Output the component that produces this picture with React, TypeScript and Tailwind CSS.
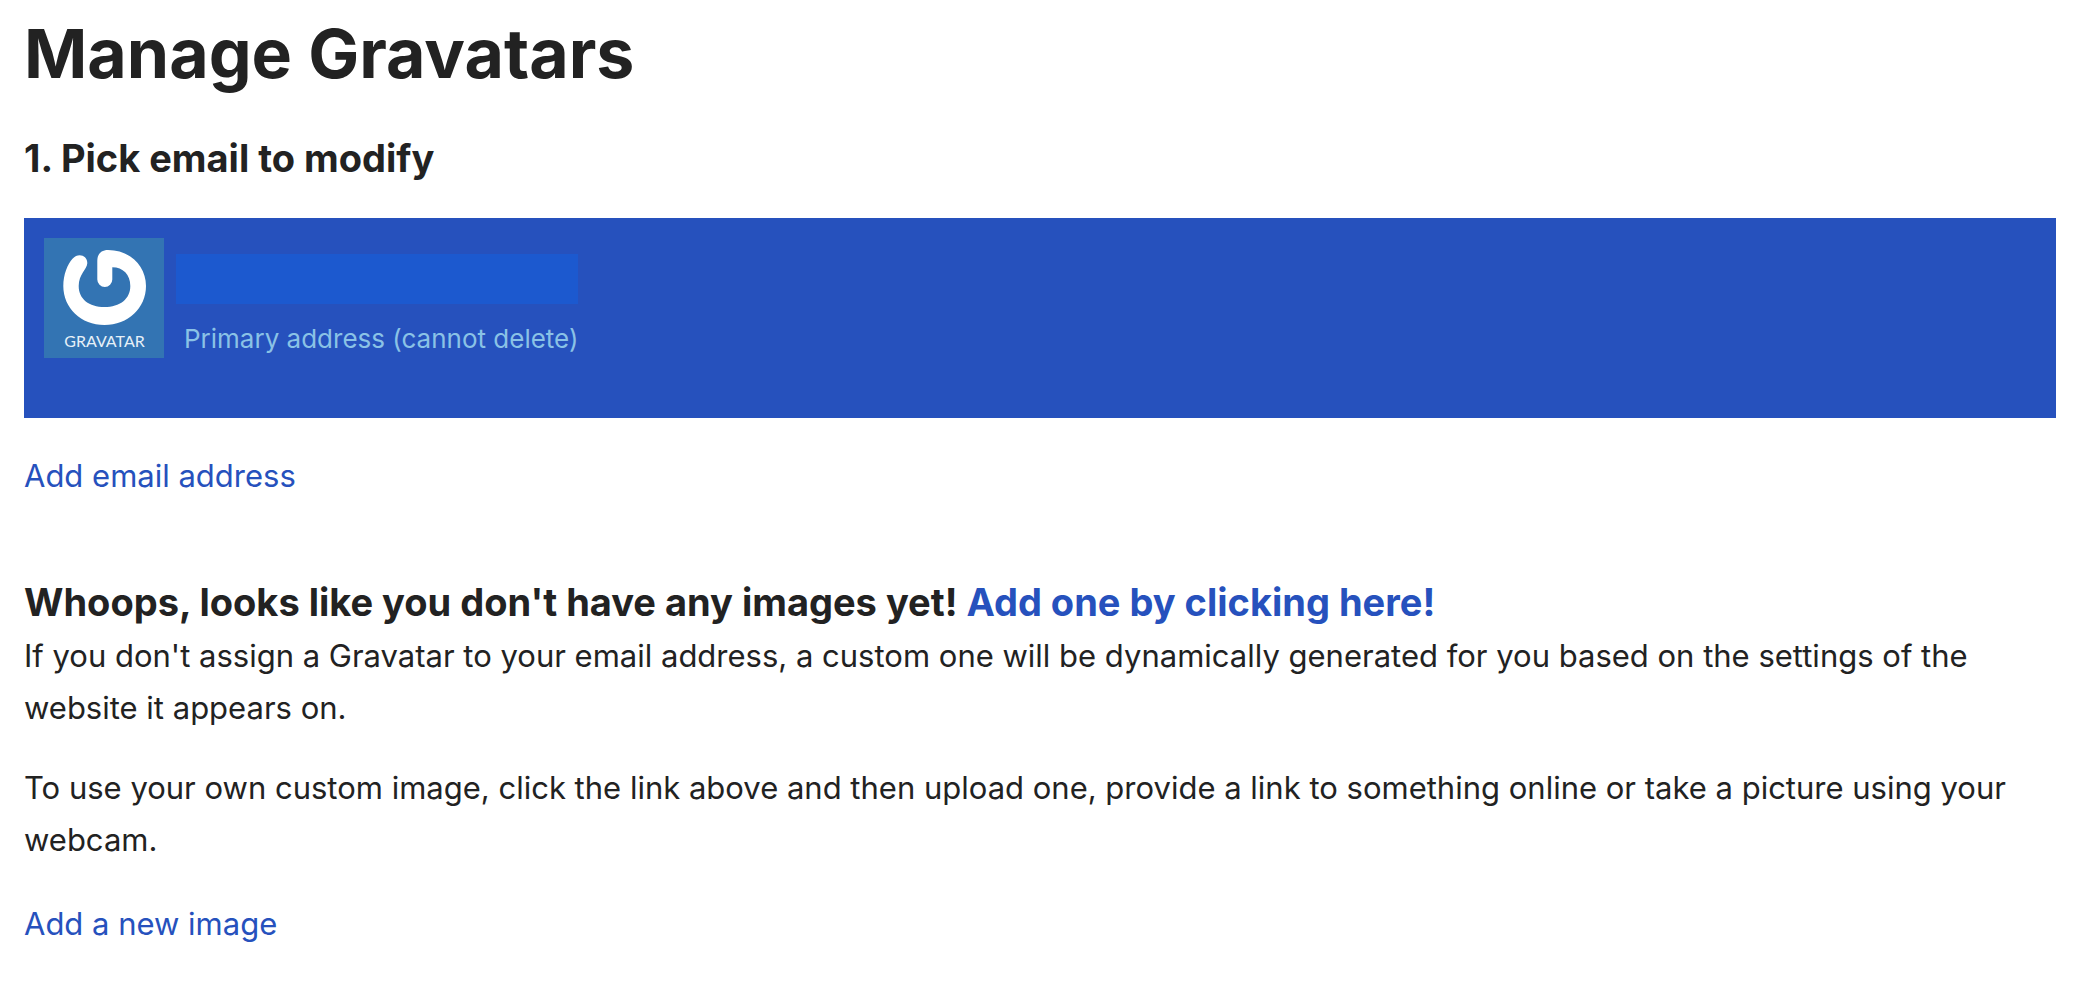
import React from 'react';

interface EmailEntry {
    id: string;
    note: string;
}

const emails: EmailEntry[] = [
    { id: 'primary', note: 'Primary address (cannot delete)' },
];

const GravatarLogo: React.FC = () => (
    <svg viewBox="0 0 120 120" className="size-[120px] shrink-0 bg-[#3374b3]" role="img" aria-label="Gravatar">
        <path
            fill="#fff"
            d="M53.3 23 C53.3 16 57 12 64 12 C86 12 102 28 102 48 C102 70 84 87 60.5 87 C37 87 19.3 70 19.3 48 C19.3 36.5 23.5 26.5 28.5 20.8 C34.5 14.2 43.5 17.8 43.3 25.2 C43 31.5 34.7 36 34.7 48 C34.7 61 45 69 60.5 69 C76 69 86.3 61 86.3 48 C86.3 36.5 79 29.3 68.3 29.3 V41.5 A7.5 7.5 0 0 1 53.3 41.5 Z"
        />
        <text x="60.5" y="109" textAnchor="middle" fill="#e6f0f8" fontSize="16" className="font-['Lato',sans-serif]">GRAVATAR</text>
    </svg>
);

const EmailCard: React.FC<{ email: EmailEntry }> = ({ email }) => (
    <li className="flex gap-3 bg-[#2651bd] px-5 pt-5 pb-[60px]">
        <GravatarLogo />
        <div className="flex flex-col pt-4">
            {/* Address is hidden */}
            <div className="h-[50px] w-[402px] bg-[#1c59cf]" />
            <p className="pt-4 pl-2 text-[26px] leading-[38px] text-[#8ac2e6]">{email.note}</p>
        </div>
    </li>
);

const App: React.FC = () => {
    return (
        <main className="px-6 pt-2 pb-10 pr-[22px] font-['Inter',sans-serif] text-[31px] leading-[52px] text-[#222]">
            <h1 className="text-[68px] leading-[90px] font-bold">Manage Gravatars</h1>

            <h2 className="mt-8 text-[38px] leading-[56px] font-bold">1. Pick email to modify</h2>
            <ul className="mt-8">
                {emails.map(email => <EmailCard key={email.id} email={email} />)}
            </ul>
            <p className="mt-8">
                <a href="#add-email" className="text-[#2651bd]">Add email address</a>
            </p>

            <section className="mt-[72px]">
                <h2 className="text-[38px] leading-[56px] font-bold">
                    Whoops, looks like you don't have any images yet!{' '}
                    <a href="#add-image" className="text-[#2651bd]">Add one by clicking here!</a>
                </h2>
                <p>
                    If you don't assign a Gravatar to your email address, a custom one will be dynamically generated for you based on the settings of the website it appears on.
                </p>
                <p className="mt-7">
                    To use your own custom image, click the link above and then upload one, provide a link to something online or take a picture using your webcam.
                </p>
                <p className="mt-8">
                    <a href="#add-image" className="text-[#2651bd]">Add a new image</a>
                </p>
            </section>
        </main>
    );
};

export default App;
